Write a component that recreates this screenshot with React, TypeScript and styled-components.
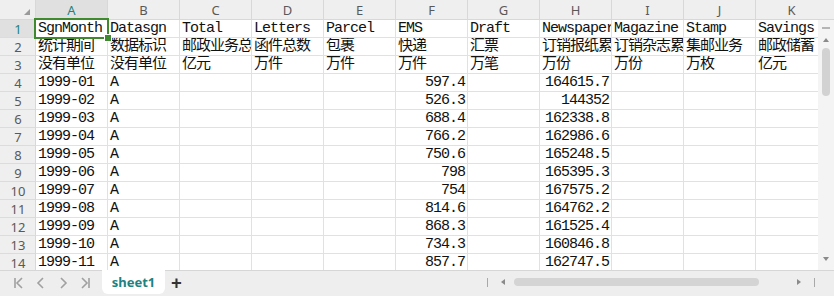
import React from 'react';
import styled, { createGlobalStyle } from 'styled-components';

const GlobalStyle = createGlobalStyle`
  html, body {
    margin: 0;
    padding: 0;
    background: #ffffff;
  }
  * {
    box-sizing: border-box;
  }
`;

const COLUMNS = ['A', 'B', 'C', 'D', 'E', 'F', 'G', 'H', 'I', 'J', 'K'];

const HEAD_ROWS: string[][] = [
  ['SgnMonth', 'Datasgn', 'Total', 'Letters', 'Parcel', 'EMS', 'Draft', 'Newspaper', 'Magazine', 'Stamp', 'Savings'],
  ['统计期间', '数据标识', '邮政业务总量', '函件总数', '包裹', '快递', '汇票', '订销报纸累计', '订销杂志累计', '集邮业务', '邮政储蓄'],
  ['没有单位', '没有单位', '亿元', '万件', '万件', '万件', '万笔', '万份', '万份', '万枚', '亿元'],
];

const EMS = ['597.4', '526.3', '688.4', '766.2', '750.6', '798', '754', '814.6', '868.3', '734.3', '857.7'];
const PAPER = ['164615.7', '144352', '162338.8', '162986.6', '165248.5', '165395.3', '167575.2', '164762.2', '161525.4', '160846.8', '162747.5'];

const dataRows: string[][] = EMS.map((ems, i) => [
  `1999-${String(i + 1).padStart(2, '0')}`,
  'A',
  '',
  '',
  '',
  ems,
  '',
  PAPER[i],
  '',
  '',
  '',
]);

const rows = [...HEAD_ROWS, ...dataRows];

const Frame = styled.div`
  width: 834px;
  height: 296px;
  display: flex;
  flex-direction: column;
  overflow: hidden;
  background: #ffffff;
`;

const Main = styled.div`
  display: flex;
  height: 270px;
`;

const Viewport = styled.div`
  position: relative;
  flex: 1;
  overflow: hidden;
`;

const Grid = styled.div`
  display: grid;
  grid-template-columns: 36px repeat(11, 72px);
  grid-auto-rows: 18px;
  grid-template-rows: 20px;
  width: max-content;
`;

const Corner = styled.div`
  position: relative;
  background: #efefef;
  border-right: 1px solid #d8d8d8;
  border-bottom: 1px solid #d8d8d8;

  &::after {
    content: '';
    position: absolute;
    right: 5px;
    bottom: 4px;
    border-style: solid;
    border-width: 0 0 6px 6px;
    border-color: transparent transparent #9a9a9a transparent;
  }
`;

const ColHeader = styled.div<{ $active?: boolean }>`
  display: flex;
  align-items: center;
  justify-content: center;
  background: ${(p) => (p.$active ? '#e0e0e0' : '#efefef')};
  border-right: 1px solid #d8d8d8;
  border-bottom: 1px solid #d8d8d8;
  font-family: 'Noto Sans', 'Noto Sans CJK SC', sans-serif;
  font-size: 13px;
  color: ${(p) => (p.$active ? '#1c8383' : '#595959')};
`;

const RowHeader = styled.div<{ $active?: boolean }>`
  display: flex;
  align-items: center;
  justify-content: center;
  padding-left: 1px;
  background: ${(p) => (p.$active ? '#e0e0e0' : '#efefef')};
  border-right: 1px solid #d8d8d8;
  border-bottom: 1px solid #dcdcdc;
  font-family: 'Noto Sans', 'Noto Sans CJK SC', sans-serif;
  font-size: 13px;
  color: ${(p) => (p.$active ? '#1c8383' : '#595959')};
`;

const Cell = styled.div<{ $numeric?: boolean }>`
  display: flex;
  align-items: center;
  justify-content: ${(p) => (p.$numeric ? 'flex-end' : 'flex-start')};
  padding: ${(p) => (p.$numeric ? '0 2px 0 0' : '0 0 0 2px')};
  border-right: 1px solid #e1e1e1;
  border-bottom: 1px solid #e1e1e1;
  overflow: hidden;
  white-space: nowrap;
  font-family: 'Liberation Mono', 'Noto Sans CJK SC', monospace;
  font-size: 15px;
  letter-spacing: -1px;
  color: #111111;
  line-height: 17px;
`;

const Selection = styled.div`
  position: absolute;
  left: 34px;
  top: 18px;
  width: 75px;
  height: 21px;
  border: 2px solid #3f8a2e;
  pointer-events: none;

  &::after {
    content: '';
    position: absolute;
    right: -5px;
    bottom: -5px;
    width: 6px;
    height: 6px;
    background: #3f8a2e;
    border: 1px solid #ffffff;
  }
`;

const VScroll = styled.div`
  width: 16px;
  display: flex;
  flex-direction: column;
  align-items: center;
  background: #f4f4f4;
`;

const VScrollHead = styled.div`
  width: 100%;
  height: 20px;
  background: #efefef;
  border-bottom: 1px solid #d8d8d8;
  flex-shrink: 0;
`;

const Dash = styled.div`
  width: 8px;
  height: 2px;
  margin-top: 7px;
  background: #b5b5b5;
`;

const Arrow = styled.div<{ $dir: 'up' | 'down' | 'left' | 'right' }>`
  width: 0;
  height: 0;
  border-style: solid;
  ${(p) =>
    p.$dir === 'up'
      ? 'border-width: 0 3.5px 4px 3.5px; border-color: transparent transparent #8a8a8a transparent;'
      : p.$dir === 'down'
      ? 'border-width: 4px 3.5px 0 3.5px; border-color: #8a8a8a transparent transparent transparent;'
      : p.$dir === 'left'
      ? 'border-width: 3.5px 4px 3.5px 0; border-color: transparent #8a8a8a transparent transparent;'
      : 'border-width: 3.5px 0 3.5px 4px; border-color: transparent transparent transparent #8a8a8a;'}
`;

const UpArrow = styled(Arrow)`
  margin-top: 9px;
`;

const VThumb = styled.div`
  width: 8px;
  height: 48px;
  margin-top: 6px;
  border-radius: 4px;
  background: #d2d2d2;
`;

const VSpacer = styled.div`
  flex: 1;
`;

const DownArrow = styled(Arrow)`
  margin-bottom: 9px;
`;

const BottomBar = styled.div`
  height: 26px;
  display: flex;
  align-items: flex-start;
  background: #eeeeee;
  border-top: 1px solid #d6d6d6;
`;

const NavGroup = styled.div`
  display: flex;
  align-items: center;
  gap: 8px;
  height: 24px;
  padding-left: 12px;
  width: 102px;
`;

const NavButton = styled.span`
  display: flex;
  align-items: center;
  justify-content: center;
  width: 14px;
  height: 14px;
  color: #a0a0a0;
`;

const SheetTab = styled.div`
  margin-top: -1px;
  width: 63px;
  height: 24px;
  display: flex;
  align-items: center;
  justify-content: center;
  background: #ffffff;
  border-radius: 0 0 6px 6px;
  font-family: 'Noto Sans', 'Open Sans', sans-serif;
  font-size: 13px;
  font-weight: 700;
  color: #1c8383;
`;

const AddTab = styled.span`
  display: flex;
  align-items: center;
  height: 24px;
  margin-left: 6px;
  font-family: 'Noto Sans', sans-serif;
  font-size: 19px;
  font-weight: 700;
  color: #333333;
`;

const HScroll = styled.div`
  margin-left: auto;
  display: flex;
  align-items: center;
  height: 22px;
  padding-right: 19px;
`;

const Tick = styled.div`
  width: 1px;
  height: 9px;
  background: #a8a8a8;
`;

const HThumb = styled.div`
  width: 245px;
  height: 8px;
  border-radius: 4px;
  background: #d4d4d4;
  margin: 0 38px 0 9px;
`;

const LeftArrow = styled(Arrow)`
  margin-left: 13px;
`;

const RightArrow = styled(Arrow)`
  margin-right: 13px;
`;

const NavIcon: React.FC<{ kind: 'first' | 'prev' | 'next' | 'last' }> = ({ kind }) => {
  const paths: Record<string, string> = {
    first: 'M3 2 V12 M10 2 L5 7 L10 12',
    prev: 'M9 2 L4 7 L9 12',
    next: 'M5 2 L10 7 L5 12',
    last: 'M11 2 V12 M4 2 L9 7 L4 12',
  };
  return (
    <svg width="14" height="14" viewBox="0 0 14 14" fill="none" stroke="currentColor" strokeWidth="1.6">
      <path d={paths[kind]} />
    </svg>
  );
};

const isNumeric = (v: string) => /^\d+(\.\d+)?$/.test(v);

export default function App() {
  return (
    <Frame>
      <GlobalStyle />
      <Main>
        <Viewport>
          <Grid>
            <Corner />
            {COLUMNS.map((c) => (
              <ColHeader key={c} $active={c === 'A'}>
                {c}
              </ColHeader>
            ))}
            {rows.map((row, r) => (
              <React.Fragment key={r}>
                <RowHeader $active={r === 0}>{r + 1}</RowHeader>
                {row.map((value, c) => (
                  <Cell key={c} $numeric={isNumeric(value)}>
                    {value}
                  </Cell>
                ))}
              </React.Fragment>
            ))}
          </Grid>
          <Selection />
        </Viewport>
        <VScroll>
          <VScrollHead />
          <Dash />
          <UpArrow $dir="up" />
          <VThumb />
          <VSpacer />
          <DownArrow $dir="down" />
        </VScroll>
      </Main>
      <BottomBar>
        <NavGroup>
          <NavButton><NavIcon kind="first" /></NavButton>
          <NavButton><NavIcon kind="prev" /></NavButton>
          <NavButton><NavIcon kind="next" /></NavButton>
          <NavButton><NavIcon kind="last" /></NavButton>
        </NavGroup>
        <SheetTab>sheet1</SheetTab>
        <AddTab>+</AddTab>
        <HScroll>
          <Tick />
          <LeftArrow $dir="left" />
          <HThumb />
          <RightArrow $dir="right" />
          <Tick />
        </HScroll>
      </BottomBar>
    </Frame>
  );
}
